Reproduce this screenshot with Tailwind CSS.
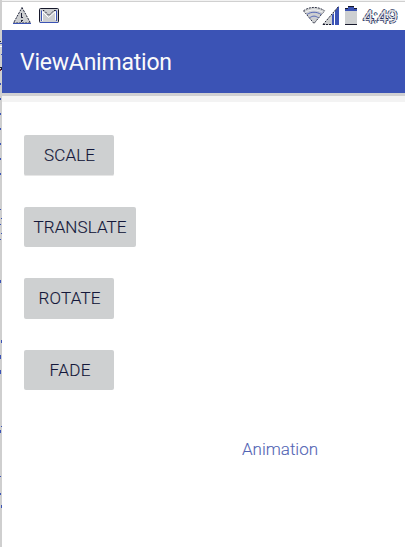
<!DOCTYPE html>
<html lang="en">
<head>
<meta charset="utf-8">
<title>ViewAnimation</title>
<script src="https://cdn.jsdelivr.net/npm/@tailwindcss/browser@4"></script>
</head>
<body class="bg-white">
<div class="flex w-[406px] h-[547px] overflow-hidden bg-white font-['Roboto',sans-serif]">
  <!-- window edge -->
  <svg class="w-[2px] h-[547px] shrink-0 bg-[#cfcfcf]" viewBox="0 0 2 547" shape-rendering="crispEdges">
    <path fill="#3b53b5" d="M0 43h2v1H0zM1 54h1v1H1zM0 83h1v2H0zM0 98h1v2H0zM0 113h1v2H0zM0 128h1v2H0zM0 143h1v2H0zM0 158h1v2H0zM0 173h1v2H0zM0 209h1v1H0zM1 218h1v1H1zM0 224h1v1H0zM1 233h1v1H1zM0 239h1v1H0zM0 280h1v3H0zM1 340h1v3H1zM0 355h1v4H0zM0 370h1v4H0zM1 426h1v1H1zM0 430h1v3H0zM0 476h1v1H0zM0 493h1v2H0zM1 505h1v3H1z"/>
    <path fill="#17192b" d="M0 41h1v1H0zM0 67h2v1H0zM1 68h1v2H1z"/>
    <path fill="#7a2630" d="M0 69h1v2H0z"/>
    <path fill="#fff" d="M0 46h2v1H0z"/>
  </svg>
  <div class="flex flex-col w-[403px]">
    <div class="h-px shrink-0 bg-[#f3f3f3]"></div>
    <header class="flex h-[29px] shrink-0 border-t border-[#d0d0d0] pl-[10px]">
      <svg class="w-[20px] h-[18px] mt-[4px]" viewBox="12 6 20 18">
        <path d="M22 7.5 30.5 23h-17z" fill="#cdcfd1" stroke="#20243a" stroke-dasharray="2 1"/>
        <path d="M13 23.5h18" stroke="#3b53b5"/><path d="M21.5 13v5M21.5 20v2M22 17.500h1M22 20.500h1" stroke="#20243a"/>
      </svg>
      <svg class="w-[20px] h-[16px] mt-[5px] ml-[7px]" viewBox="39 7 20 16">
        <rect x="39.5" y="8.5" width="19" height="14" rx="1" fill="#cdcfd1" stroke="#17192b"/>
        <path d="M40 22.5h18" stroke="#3b53b5"/><path d="M41.5 21V10.5M56.5 21V10.5" stroke="#3b53b5"/>
        <path d="M42.500 21V11.500l6 6 7-6V20" fill="none" stroke="#fff"/>
        <path d="M43 10.500h1l5 5 5-5h2" fill="none" stroke="#20243a" stroke-dasharray="2 1"/>
      </svg>
      <svg class="w-[56px] h-[20px] mt-[4px] ml-[244px]" viewBox="303 6 56 20">
        <path d="M303.500 10.800c6-4.500 15-4.500 21 0L314 23.500z" fill="#cdcfd1" stroke="#34384a" stroke-dasharray="2 1"/>
        <path d="M305 12.500c5.500-3.500 12.500-3.500 18 0" fill="none" stroke="#fff" stroke-width=".8"/>
        <path d="M307 14.500c4-3 10-3 14 0M309.500 18c3-2.500 6-2.500 9 0" fill="none" stroke="#4a5fb5" stroke-width=".9"/>
        <path d="M339 6v19h-16z" fill="#cdcfd1"/><path d="M334 13v12h-2V15zM339 6v19h-4V11z" fill="#3b53b5"/>
        <path d="M323 24.500 338.500 6.500M323 24.500h9" fill="none" stroke="#17192b" stroke-dasharray="2 1"/>
        <path d="M334.500 12v13" stroke="#fff"/>
        <path d="M345 8h3V6h6v2h3v17h-12z" fill="#cdcfd1"/>
        <path d="M345 8h3V6h6v2h3v3h-12z" fill="#3b53b5"/>
        <path d="M345 8.500h3M348 6.500h6M354 8.500h3M345 24.500h12" stroke="#17192b"/>
      </svg>
      <svg class="w-[38px] h-[22px] ml-[3px] mt-[3px] block text-[19px] font-normal"><text x="1" y="18" textLength="35" fill="#dcdde0" stroke="#2a3360" stroke-width="1.600" stroke-dasharray="4 1" paint-order="stroke">4:49</text></svg>
    </header>
    <div class="h-[63px] shrink-0 bg-[#3b53b5] pl-[18px] pt-[18px]">
      <h1 class="text-[23px] leading-[28px] whitespace-nowrap"><svg class="w-[153px] h-[28px] overflow-visible"><text x="0" y="22" textLength="152" lengthAdjust="spacing" fill="#fafafa">ViewAnimation</text></svg></h1>
    </div>
    <div class="h-[9px] shrink-0 bg-[#f3f3f3] border-t-3 border-[#d0d0d2]"></div>
    <main class="flex flex-col items-start pl-[22px] pt-[33px] gap-[31px] text-[17px] font-light">
      <button class="w-[90px] h-[41px] rounded-[2px] bg-[#ced0d1] border-b border-[#e6e6e6]"><svg class="w-[90px] h-[40px] block"><text x="20" y="26" textLength="51" fill="#14183a" stroke="#14183a" stroke-width=".15">SCALE</text></svg></button>
      <button class="w-[112px] h-[40px] rounded-[2px] bg-[#ced0d1]"><svg class="w-[112px] h-[40px] block"><text x="9.500" y="26" textLength="93" fill="#14183a" stroke="#14183a" stroke-width=".15">TRANSLATE</text></svg></button>
      <button class="w-[90px] h-[41px] rounded-[2px] bg-[#ced0d1]"><svg class="w-[90px] h-[41px] block"><text x="14.500" y="26" textLength="62" fill="#14183a" stroke="#14183a" stroke-width=".15">ROTATE</text></svg></button>
      <button class="w-[90px] h-[40px] rounded-[2px] bg-[#ced0d1]"><svg class="w-[90px] h-[40px] block"><text x="25.500" y="26" textLength="41" fill="#14183a" stroke="#14183a" stroke-width=".15">FADE</text></svg></button>
      <p class="ml-[218px] mt-[18px] leading-[20px]"><svg class="w-[78px] h-[20px] block"><text x="0" y="16" textLength="76" fill="#5264b4" stroke="#5264b4" stroke-width=".1">Animation</text></svg></p>
    </main>
  </div>
</div>
</body>
</html>
